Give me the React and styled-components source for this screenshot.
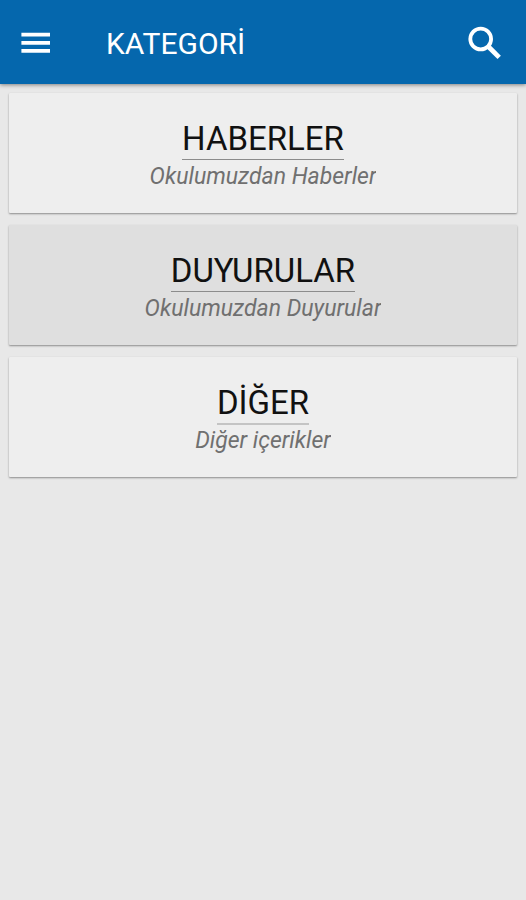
import React from 'react'
import styled, { createGlobalStyle } from 'styled-components'

const categories = [
  { title: 'HABERLER', text: 'Okulumuzdan Haberler' },
  { title: 'DUYURULAR', text: 'Okulumuzdan Duyurular', active: true },
  { title: 'DİĞER', text: 'Diğer içerikler', soft: true },
]

export default () => {
  return (
    <>
      <GlobalStyle />
      <AppBar>
        <IconButton aria-label="Menü">
          <svg width="38" height="38" viewBox="0 0 38 38" fill="currentColor">
            <path d="M5.4 9.8h28.6v3.8H5.4zM5.4 17.9h28.6v3.8H5.4zM5.4 26h28.6v3.8H5.4z" />
          </svg>
        </IconButton>
        <Title>KATEGORİ</Title>
        <IconButton aria-label="Ara">
          <svg width="46" height="46" viewBox="0 0 46 46" fill="none" stroke="currentColor">
            <circle cx="16.7" cy="20" r="10.4" strokeWidth="3.8" />
            <path d="M24 27.2L35.2 38.4" strokeWidth="4.8" />
          </svg>
        </IconButton>
      </AppBar>
      <List>
        {categories.map(({ title, text, active, soft }) => (
          <Card key={title} $active={active}>
            <CardTitle $soft={soft}>{title}</CardTitle>
            <CardText>{text}</CardText>
          </Card>
        ))}
      </List>
    </>
  )
}

const GlobalStyle = createGlobalStyle`
  * {
    box-sizing: border-box;
  }

  body {
    margin: 0;
    background: #e8e8e8;
    font-family: Roboto, sans-serif;
  }
`

const AppBar = styled.header`
  display: flex;
  align-items: center;
  height: 84px;
  padding: 0 16px;
  background: #0567ad;
  color: #fff;
  box-shadow: 0 1px 4px rgba(0, 0, 0, 0.45);
`

const IconButton = styled.button`
  display: flex;
  padding: 0;
  border: 0;
  background: none;
  color: inherit;
  cursor: pointer;
`

const Title = styled.h1`
  flex: 1;
  margin: 4px 0 0 52px;
  font-size: 30px;
  line-height: 36px;
  font-weight: 400;
`

const List = styled.main`
  display: flex;
  flex-direction: column;
  gap: 12px;
  padding: 9px;
`

const Card = styled.button`
  display: flex;
  flex-direction: column;
  align-items: center;
  padding: 26px 16px 21px;
  border: 0;
  border-radius: 1px;
  background: ${props => props.$active ? '#dfdfdf' : '#eee'};
  box-shadow: 0 1px 2px rgba(0, 0, 0, 0.4);
  font-family: inherit;
  cursor: pointer;
`

const CardTitle = styled.span`
  border-bottom: ${props => props.$soft ? '2px solid #c4c4c4' : '1px solid #8c8c8c'};
  margin-bottom: ${props => props.$soft ? '1px' : '2px'};
  color: #111;
  font-size: 33px;
  line-height: 40px;
`

/* the slanted last letter is cut at the edge of the text box */
const CardText = styled.span`
  overflow: hidden;
  color: #707070;
  font-size: 23px;
  line-height: 30px;
  font-style: italic;
`
